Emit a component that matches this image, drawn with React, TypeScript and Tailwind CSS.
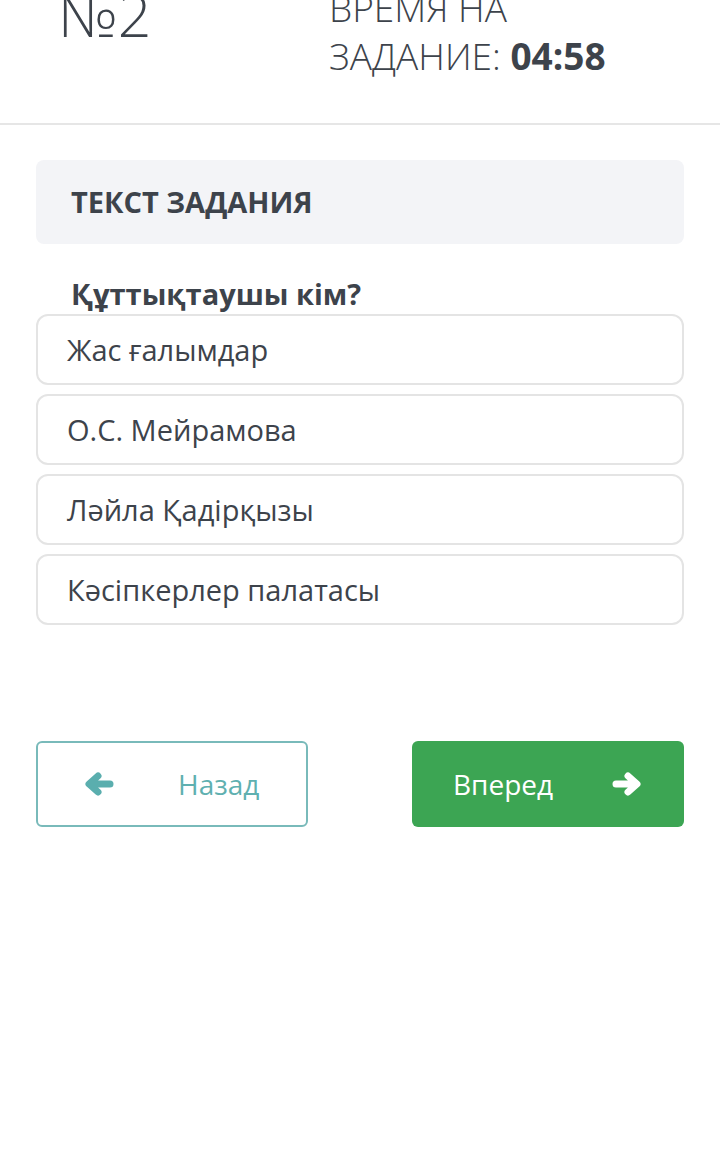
import React from "react";

const options = ["Жас ғалымдар", "О.С. Мейрамова", "Ләйла Қадірқызы", "Кәсіпкерлер палатасы"];

function Arrow({ dir, color }: { dir: "left" | "right"; color: string }) {
  return (
    <svg width="30" height="24" viewBox="0 0 30 24" className={dir === "right" ? "-scale-x-100" : ""}>
      <path d="M26 12 H6 M14 4 L5 12 L14 20" fill="none" stroke={color} strokeWidth="7" strokeLinecap="round" strokeLinejoin="round" />
    </svg>
  );
}

export default function App() {
  return (
    <div className="w-[720px] h-[1168px] bg-white overflow-hidden text-[#3d434b]" style={{ fontFamily: '"Open Sans", "Noto Sans", sans-serif' }}>
      <div className="h-[125px] border-b-2 border-[#e6e6e6] overflow-hidden">
        <div className="flex items-start">
          <div className="w-[329px] pl-[58px] mt-[-15px] text-[59px] leading-[59px] font-light">№2</div>
          <div className="mt-[-16px] text-[37px] leading-[48px] font-light">
            <div>ВРЕМЯ НА</div>
            <div>
              ЗАДАНИЕ: <span className="font-bold">04:58</span>
            </div>
          </div>
        </div>
      </div>
      <div className="px-[36px] pt-[35px]">
        <div className="h-[84px] rounded-[8px] bg-[#f3f4f7] flex items-center pl-[35px]">
          <span className="text-[29px] font-bold">ТЕКСТ ЗАДАНИЯ</span>
        </div>
        <div className="pl-[35px] mt-[32px] text-[29px] leading-[36px] font-bold">Құттықтаушы кім?</div>
        <div className="flex flex-col gap-[9px] mt-[2px]">
          {options.map((o) => (
            <div key={o} className="h-[71px] rounded-[12px] border-2 border-[#e4e4e4] flex items-center pl-[29px] text-[29px]">
              {o}
            </div>
          ))}
        </div>
        <div className="flex justify-between mt-[116px]">
          <div className="w-[272px] h-[86px] rounded-[6px] border-2 border-[#79baba] flex items-center text-[#5fb0b0]">
            <div className="ml-[46px] flex">
              <Arrow dir="left" color="#5aaeae" />
            </div>
            <span className="ml-[64px] text-[28px]">Назад</span>
          </div>
          <div className="w-[272px] h-[86px] rounded-[6px] bg-[#3ca553] flex items-center text-white">
            <span className="ml-[41px] text-[28px]">Вперед</span>
            <div className="ml-[59px] flex">
              <Arrow dir="right" color="#ffffff" />
            </div>
          </div>
        </div>
      </div>
    </div>
  );
}
